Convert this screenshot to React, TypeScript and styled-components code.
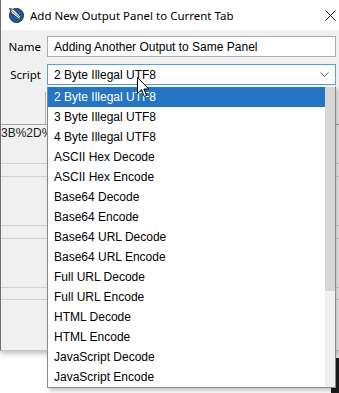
import styled, { createGlobalStyle } from "styled-components";

const GlobalStyle = createGlobalStyle`
  html, body {
    margin: 0;
    padding: 0;
    background: #fff;
  }
  body {
    font-family: "Liberation Sans", Arial, sans-serif;
  }
`;

const Screen = styled.div`
  position: relative;
  width: 339px;
  height: 393px;
  overflow: hidden;
  background: #fff;
`;

const Dialog = styled.div`
  position: relative;
  z-index: 1;
  width: 339px;
  height: 351px;
  box-sizing: border-box;
  border-left: 1px solid #6f6f6f;
  border-bottom: 1px solid #c4c4c4;
  background: #f0f0f0;
  box-shadow: 0 2px 6px rgba(0, 0, 0, 0.3);
  display: flex;
  flex-direction: column;
`;

const TitleBar = styled.div`
  height: 30px;
  flex: none;
  background: #fff;
  display: flex;
  align-items: center;
  padding-left: 7px;
  gap: 6px;
  font-family: "Segoe UI", "Noto Sans", sans-serif;
  font-size: 11.5px;
  color: #000;
`;

const Title = styled.span`
  flex: 1;
  white-space: nowrap;
`;

const CloseButton = styled.div`
  width: 46px;
  height: 30px;
  display: flex;
  align-items: center;
  justify-content: center;
  margin-right: -14px;
`;

const Form = styled.div`
  padding-top: 6px;
  display: flex;
  flex-direction: column;
  gap: 7px;
`;

const Field = styled.div`
  display: grid;
  grid-template-columns: 46px 289px;
  align-items: center;
`;

const Label = styled.label`
  font-family: "Segoe UI", "Noto Sans", sans-serif;
  font-size: 11.5px;
  text-align: right;
  padding-right: 6px;
  color: #000;
`;

const TextBox = styled.div<{ $focused?: boolean }>`
  height: 21px;
  box-sizing: border-box;
  border: 1px solid ${(p) => (p.$focused ? "#5a9fe6" : "#acacac")};
  background: #fff;
  display: flex;
  align-items: center;
  padding-left: 6px;
  font-size: 12px;
  color: #000;
  white-space: nowrap;
`;

const SelectText = styled.span`
  flex: 1;
`;

const Chevron = styled.svg`
  margin-right: 6px;
`;

const Backdrop = styled.div`
  margin-top: 7px;
  display: flex;
  flex-direction: column;
`;

const Strip = styled.div`
  height: 33px;
  box-sizing: border-box;
  border-bottom: 1px solid #a3a3a3;
  display: flex;
`;

const StripCell = styled.div`
  width: 45px;
  border-right: 1px solid #b5b5b5;
  box-sizing: border-box;
`;

const Band = styled.div<{ $h: number }>`
  height: ${(p) => p.$h}px;
  flex: none;
  border-bottom: 1px solid #d2d2d2;
  padding-top: 1px;
  box-sizing: border-box;
`;

const ClippedText = styled.span`
  display: block;
  width: 46px;
  overflow: hidden;
  white-space: nowrap;
  font-size: 12px;
  color: #1a1a1a;
`;

const ListBox = styled.div`
  position: absolute;
  z-index: 2;
  left: 47px;
  top: 86px;
  width: 289px;
  height: 302px;
  box-sizing: border-box;
  border: 1px solid #8a8a8a;
  border-top-color: #fff;
  background: #fff;
  box-shadow: 2px 3px 4px rgba(0, 0, 0, 0.22);
  display: flex;
`;

const Items = styled.ul`
  list-style: none;
  margin: 0;
  padding: 0;
  flex: 1;
`;

const Item = styled.li<{ $active?: boolean }>`
  height: 20px;
  line-height: 20px;
  padding-left: 6px;
  font-size: 12px;
  white-space: nowrap;
  color: ${(p) => (p.$active ? "#fff" : "#000")};
  background: ${(p) => (p.$active ? "#2675c5" : "transparent")};
`;

const ScrollTrack = styled.div`
  width: 10px;
  background: #f0f0f0;
  display: flex;
  flex-direction: column;
`;

const ScrollThumb = styled.div`
  height: 204px;
  background: #d6d6d6;
`;

const DarkCorner = styled.div`
  position: absolute;
  right: 0;
  bottom: 0;
  width: 8px;
  height: 35px;
  background: #1e1e1e;
`;

const Cursor = styled.svg`
  position: absolute;
  z-index: 3;
  left: 137px;
  top: 77px;
`;

const scripts = [
  "2 Byte Illegal UTF8",
  "3 Byte Illegal UTF8",
  "4 Byte Illegal UTF8",
  "ASCII Hex Decode",
  "ASCII Hex Encode",
  "Base64 Decode",
  "Base64 Encode",
  "Base64 URL Decode",
  "Base64 URL Encode",
  "Full URL Decode",
  "Full URL Encode",
  "HTML Decode",
  "HTML Encode",
  "JavaScript Decode",
  "JavaScript Encode",
];

// heights of the panel rows showing behind the dropdown
const bands = [39, 13, 49, 13, 49, 12];

const AppIcon = () => (
  <svg width="16" height="16" viewBox="0 0 16 16">
    <circle cx="8.5" cy="8.5" r="7" fill="#1f5aa0" stroke="#0c2a52" strokeWidth="1" />
    <path d="M1.5 1.5 L6 2.5 L13 10 L11.5 12.5 L3.5 6 Z" fill="#fff" stroke="#1a1a1a" strokeWidth="0.8" />
    <path d="M2.5 2.5 L12 11" stroke="#1a1a1a" strokeWidth="0.7" />
  </svg>
);

export default function App() {
  return (
    <>
      <GlobalStyle />
      <Screen>
        <DarkCorner />
        <Dialog>
          <TitleBar>
            <AppIcon />
            <Title>Add New Output Panel to Current Tab</Title>
            <CloseButton>
              <svg width="11" height="11" viewBox="0 0 11 11">
                <path d="M0.5 0.5 L10.5 10.5 M10.5 0.5 L0.5 10.5" stroke="#111" strokeWidth="1" />
              </svg>
            </CloseButton>
          </TitleBar>
          <Form>
            <Field>
              <Label>Name</Label>
              <TextBox>Adding Another Output to Same Panel</TextBox>
            </Field>
            <Field>
              <Label>Script</Label>
              <TextBox $focused>
                <SelectText>2 Byte Illegal UTF8</SelectText>
                <Chevron width="9" height="5" viewBox="0 0 9 5">
                  <path d="M0.5 0.5 L4.5 4.5 L8.5 0.5" fill="none" stroke="#606060" strokeWidth="1" />
                </Chevron>
              </TextBox>
            </Field>
          </Form>
          <Backdrop>
            <Strip>
              <StripCell />
            </Strip>
            {bands.map((h, i) => (
              <Band key={i} $h={h}>
                {i === 0 && <ClippedText>3B%2D%2C</ClippedText>}
              </Band>
            ))}
          </Backdrop>
        </Dialog>
        <ListBox>
          <Items>
            {scripts.map((s, i) => (
              <Item key={s} $active={i === 0}>
                {s}
              </Item>
            ))}
          </Items>
          <ScrollTrack>
            <ScrollThumb />
          </ScrollTrack>
        </ListBox>
        <Cursor width="13" height="21" viewBox="0 0 13 21">
          <path d="M0.5 0.5 L0.5 16.5 L4.5 12.7 L7.3 19.5 L9.6 18.5 L6.9 12 L11.8 12 Z" fill="#fff" stroke="#000" strokeWidth="1" strokeLinejoin="round" />
        </Cursor>
      </Screen>
    </>
  );
}
